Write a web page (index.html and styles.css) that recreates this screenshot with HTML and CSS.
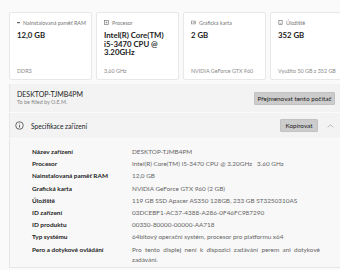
FILE: index.html
```html
<!DOCTYPE html>
<html lang="cs">
<head>
    <meta charset="UTF-8">
    <title>Informace o systému</title>
    <link rel="stylesheet" href="styles.css">
</head>
<body>
    <div class="page">
        <div class="cards">
            <div class="card">
                <div class="card-label">
                    <svg class="icon" viewBox="0 0 6 6"><rect x="0" y="2" width="6" height="2.4" fill="#666"/></svg>
                    Nainstalovaná paměť RAM
                </div>
                <div class="card-value">12,0 GB</div>
                <div class="card-foot">DDR3</div>
            </div>
            <div class="card">
                <div class="card-label">
                    <svg class="icon" viewBox="0 0 6 6"><rect x="0.5" y="0.5" width="5" height="5" fill="none" stroke="#777" stroke-width="0.8"/><rect x="2" y="2" width="2" height="2" fill="#999"/></svg>
                    Procesor
                </div>
                <div class="card-value">Intel(R) Core(TM) i5-3470 CPU @ 3.20GHz</div>
                <div class="card-foot">3,60 GHz</div>
            </div>
            <div class="card">
                <div class="card-label">
                    <svg class="icon" viewBox="0 0 7 6"><rect x="0.5" y="1" width="6" height="4" fill="none" stroke="#777" stroke-width="0.8"/><circle cx="4.3" cy="3" r="1" fill="#888"/></svg>
                    Grafická karta
                </div>
                <div class="card-value">2 GB</div>
                <div class="card-foot">NVIDIA GeForce GTX 960</div>
            </div>
            <div class="card">
                <div class="card-label">
                    <svg class="icon" viewBox="0 0 6 6"><rect x="1" y="0.5" width="4" height="5" fill="none" stroke="#777" stroke-width="0.8"/><line x1="2" y1="4" x2="4" y2="4" stroke="#777" stroke-width="0.6"/></svg>
                    Úložiště
                </div>
                <div class="card-value">352 GB</div>
                <div class="card-foot">Využito 50 GB z 352 GB</div>
            </div>
        </div>

        <div class="panel name-row">
            <div>
                <div class="pc-name">DESKTOP-TJMB4PM</div>
                <div class="pc-sub">To be filled by O.E.M.</div>
            </div>
            <button class="btn rename">Přejmenovat tento počítač</button>
        </div>

        <div class="panel spec-head">
            <svg class="info" viewBox="0 0 10 10"><circle cx="5" cy="5" r="4.2" fill="none" stroke="#333" stroke-width="0.8"/><line x1="5" y1="4.2" x2="5" y2="7.3" stroke="#333" stroke-width="0.8"/><circle cx="5" cy="2.9" r="0.5" fill="#333"/></svg>
            <span class="spec-title">Specifikace zařízení</span>
            <button class="btn copy">Kopírovat</button>
            <svg class="chevron" viewBox="0 0 10 6"><polyline points="1,5 5,1 9,5" fill="none" stroke="#888" stroke-width="0.8"/></svg>
        </div>

        <div class="panel spec-body">
            <div class="row"><span class="key">Název zařízení</span><span class="val">DESKTOP-TJMB4PM</span></div>
            <div class="row"><span class="key">Procesor</span><span class="val">Intel(R) Core(TM) i5-3470 CPU @ 3.20GHz&nbsp;&nbsp; 3.60 GHz</span></div>
            <div class="row"><span class="key">Nainstalovaná paměť RAM</span><span class="val">12,0 GB</span></div>
            <div class="row"><span class="key">Grafická karta</span><span class="val">NVIDIA GeForce GTX 960 (2 GB)</span></div>
            <div class="row"><span class="key">Úložiště</span><span class="val">119 GB SSD Apacer AS350 128GB, 233 GB ST3250310AS</span></div>
            <div class="row"><span class="key">ID zařízení</span><span class="val">03DCEBF1-AC37-4388-A286-0F46FC987290</span></div>
            <div class="row"><span class="key">ID produktu</span><span class="val">00330-80000-00000-AA718</span></div>
            <div class="row"><span class="key">Typ systému</span><span class="val">64bitový operační systém, procesor pro platformu x64</span></div>
            <div class="row"><span class="key">Pero a dotykové ovládání</span><span class="val justify">Pro tento displej není k dispozici zadávání perem ani dotykové zadávání.</span></div>
        </div>
    </div>
</body>
</html>
```

FILE: styles.css
```css
body {
    margin: 0;
    padding: 0;
    width: 340px;
    height: 270px;
    overflow: hidden;
    background: #fafafa;
    font-family: 'Lato', 'Liberation Sans', sans-serif;
    color: #1b1b1b;
}
.page {
    box-sizing: border-box;
    padding: 12px 0 0 9px;
    width: 340px;
}
.cards {
    display: grid;
    grid-template-columns: repeat(4, 83px);
    gap: 4px;
}
.card {
    height: 68px;
    box-sizing: border-box;
    background: #fff;
    border: 1px solid #e8e8e8;
    border-radius: 2px;
    padding: 6px 5px 5px 7px;
    display: flex;
    flex-direction: column;
}
.card-label {
    display: flex;
    align-items: center;
    gap: 3px;
    font-size: 5.4px;
    color: #777;
    height: 7px;
    white-space: nowrap;
}
.icon {
    width: 5px;
    height: 5px;
}
.card-value {
    margin-top: 5px;
    font-size: 7.8px;
    font-weight: 700;
    line-height: 8.6px;
    color: #1b1b1b;
}
.card-foot {
    margin-top: auto;
    font-size: 5.4px;
    color: #888;
    white-space: nowrap;
}
.panel {
    box-sizing: border-box;
    background: #f3f3f3;
    border-left: 1px solid #e6e6e6;
}
.name-row {
    margin-top: 4px;
    height: 28px;
    display: flex;
    align-items: center;
    justify-content: space-between;
    padding: 0 5px 0 7px;
}
.pc-name {
    font-size: 7px;
    color: #1b1b1b;
    line-height: 7.5px;
}
.pc-sub {
    font-size: 5.4px;
    color: #888;
    line-height: 6px;
}
.btn {
    font-family: inherit;
    font-size: 6.4px;
    color: #1b1b1b;
    background: #cccccc;
    border: 1px solid #c2c2c2;
    border-radius: 1px;
    height: 13px;
    padding: 0;
    line-height: 11px;
    white-space: nowrap;
}
.rename {
    width: 81px;
}
.spec-head {
    margin-top: 1px;
    height: 25px;
    display: flex;
    align-items: center;
    padding: 0 6px 0 5px;
}
.info {
    width: 9px;
    height: 9px;
}
.spec-title {
    margin-left: 7px;
    font-size: 6.6px;
    flex: 1;
}
.copy {
    width: 38px;
}
.chevron {
    width: 7px;
    height: 4px;
    margin-left: 9px;
}
.spec-body {
    margin-top: 1px;
    height: 129px;
    background: #f8f8f8;
    border-bottom: 1px solid #e6e6e6;
    padding: 8px 0 0 22px;
}
.row {
    display: grid;
    grid-template-columns: 100px 188px;
    min-height: 12.2px;
    font-size: 6.4px;
    line-height: 10px;
}
.key {
    font-weight: 700;
    color: #1b1b1b;
}
.val {
    color: #666;
}
.justify {
    text-align: justify;
}
```
